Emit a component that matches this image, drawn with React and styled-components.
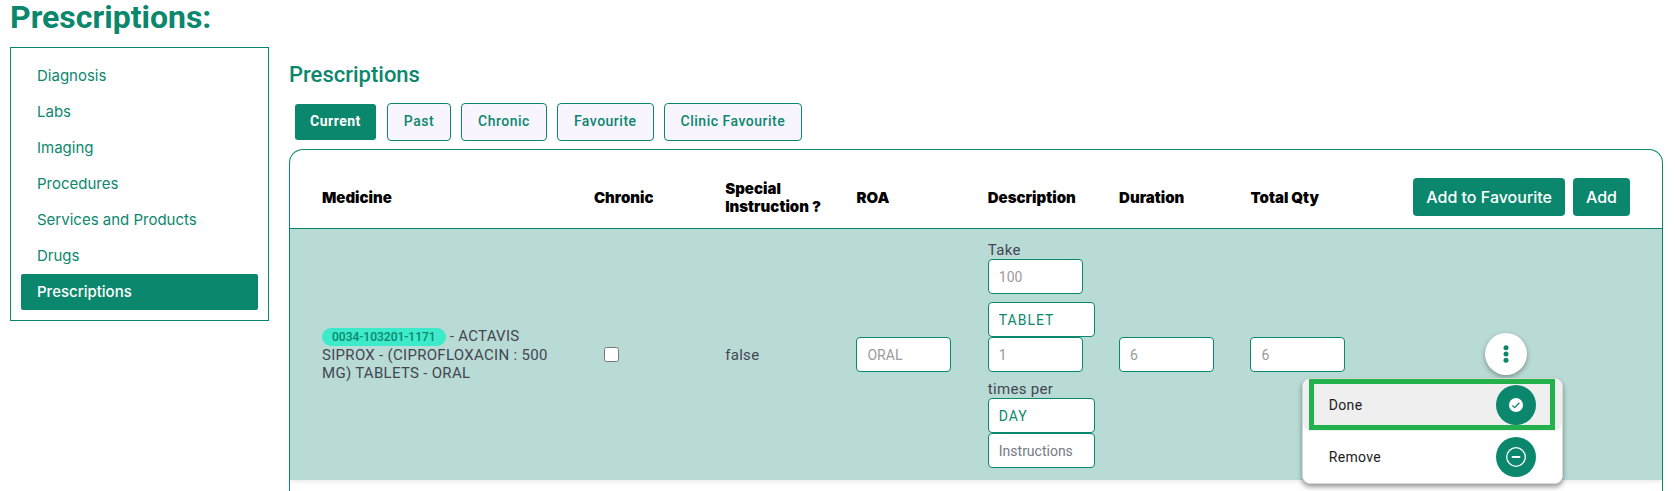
import React from "react";
import styled, { createGlobalStyle, ThemeProvider } from "styled-components";

const theme = {
  colors: {
    primary: "#0b876d",
    row: "#b8dbd5",
    tab: "#f8f5ff",
    text: "#444651",
    muted: "#9b9b9b",
    highlight: "#22b14c",
  },
};

const GlobalStyle = createGlobalStyle`
  * {
    box-sizing: border-box;
  }

  body {
    margin: 0;
    background: #fff;
    font-family: Roboto, sans-serif;
  }

  button, input, select {
    font-family: inherit;
  }
`;

const Page = styled.div`
  display: flex;
  flex-direction: column;
  min-height: 100vh;
  padding: 0 12px 0 10px;
`;

const PageTitle = styled.h1`
  margin: 0;
  padding-bottom: 13px;
  font-size: 32px;
  line-height: 34px;
  font-weight: 700;
  color: ${(props) => props.theme.colors.primary};
`;

const Body = styled.div`
  display: flex;
  flex: 1;
  gap: 20px;
`;

const Sidebar = styled.nav`
  display: flex;
  flex-direction: column;
  align-self: flex-start;
  flex: 0 0 259px;
  padding: 10px;
  border: 1px solid ${(props) => props.theme.colors.primary};
`;

const SidebarLink = styled.a`
  padding: 0 16px;
  border-radius: 2px;
  font-family: Inter, sans-serif;
  font-size: 15px;
  line-height: 36px;
  font-weight: ${(props) => (props.$active ? 500 : 400)};
  text-decoration: none;
  color: ${(props) => (props.$active ? "#fff" : props.theme.colors.primary)};
  background: ${(props) => (props.$active ? props.theme.colors.primary : "none")};
`;

const Main = styled.main`
  display: flex;
  flex-direction: column;
  flex: 1;
  min-width: 0;
`;

const SectionTitle = styled.h2`
  margin: 0;
  padding: 15px 0;
  font-size: 22px;
  line-height: 26px;
  font-weight: 500;
  color: ${(props) => props.theme.colors.primary};
`;

const Tabs = styled.div`
  display: flex;
  gap: 10px;
  padding: 0 5px 8px;
`;

const Tab = styled.button`
  height: 38px;
  padding: 0 ${(props) => (props.$active ? "15px" : "16px")} 2px;
  border: 1px solid
    ${(props) => (props.$active ? "transparent" : props.theme.colors.primary)};
  border-radius: 4px;
  font-size: 14px;
  font-weight: ${(props) => (props.$active ? 700 : 500)};
  letter-spacing: 0.5px;
  color: ${(props) => (props.$active ? "#fff" : props.theme.colors.primary)};
  background: ${(props) =>
    props.$active ? props.theme.colors.primary : props.theme.colors.tab};
  background-clip: padding-box;
`;

const Card = styled.section`
  flex: 1;
  border: 1px solid ${(props) => props.theme.colors.primary};
  border-bottom: 0;
  border-radius: 14px 14px 0 0;
`;

const Table = styled.table`
  width: 100%;
  table-layout: fixed;
  border-collapse: separate;
  border-spacing: 0;
`;

const Col = styled.col`
  width: ${(props) => props.$width};
`;

const Th = styled.th`
  height: 79px;
  padding: 17px 24px 0 0;
  border-bottom: 1px solid ${(props) => props.theme.colors.primary};
  font-family: Inter, sans-serif;
  font-size: 15px;
  line-height: 18px;
  font-weight: 900;
  text-align: left;
  color: #000;

  &:first-child {
    padding-left: 32px;
  }

  &:last-child {
    padding-top: 16px;
    padding-right: 32px;
  }
`;

const Row = styled.tr`
  background: ${(props) => props.theme.colors.row};
  box-shadow: 0 2px 4px rgba(0, 0, 0, 0.08);
`;

const Td = styled.td`
  padding: 12px 0;
  font-size: 15px;
  line-height: 18px;
  letter-spacing: 0.3px;
  color: ${(props) => props.theme.colors.text};

  &:first-child {
    padding-left: 32px;
    padding-right: 40px;
  }

  &:last-child {
    padding-right: 32px;
    padding-bottom: 14px;
  }
`;

const HeaderActions = styled.div`
  display: flex;
  justify-content: flex-end;
  gap: 8px;
`;

const ActionButton = styled.button`
  height: 38px;
  padding: 0 13px;
  border: 0;
  border-radius: 4px;
  font-family: Inter, sans-serif;
  font-size: 16px;
  font-weight: 500;
  white-space: nowrap;
  color: #fff;
  background: ${(props) => props.theme.colors.primary};
`;

const Code = styled.span`
  display: inline-block;
  padding: 0 10px;
  border-radius: 10px;
  font-size: 12px;
  font-weight: 500;
  letter-spacing: normal;
  color: ${(props) => props.theme.colors.primary};
  background: #3deac9;
`;

const Checkbox = styled.input`
  display: block;
  width: 15px;
  height: 15px;
  margin: 0 10px;
`;

const Field = styled.input`
  display: block;
  width: ${(props) => (props.$wide ? "107px" : "95px")};
  height: 35px;
  padding: 0 10px;
  border: 1px solid ${(props) => props.theme.colors.primary};
  border-radius: 4px;
  font-size: 14px;
  color: ${(props) => props.theme.colors.muted};
  background: #fff;

  &::placeholder {
    color: #747b84;
  }
`;

const Select = styled.select`
  display: block;
  width: 107px;
  height: 35px;
  padding: 0 10px;
  border: 1px solid ${(props) => props.theme.colors.primary};
  border-radius: 4px;
  appearance: none;
  font-size: 14px;
  letter-spacing: 1px;
  color: ${(props) => props.theme.colors.primary};
  background: #fff;
`;

const Dosage = styled.div`
  display: flex;
  flex-direction: column;
  gap: 8px;
`;

const MenuAnchor = styled.div`
  position: relative;
  width: 42px;
  margin: 0 auto;
`;

const MoreButton = styled.button`
  display: flex;
  align-items: center;
  justify-content: center;
  width: 42px;
  height: 42px;
  padding: 0;
  border: 0;
  border-radius: 50%;
  background: #fff;
  box-shadow: 0 2px 5px rgba(0, 0, 0, 0.35);
`;

const Menu = styled.div`
  position: absolute;
  top: 45px;
  right: -36px;
  width: 261px;
  border: 1px solid #d9d9d9;
  border-radius: 8px;
  background: #fff;
  box-shadow: 0 3px 5px rgba(0, 0, 0, 0.4);
`;

const MenuItem = styled.button`
  position: relative;
  display: flex;
  align-items: center;
  justify-content: space-between;
  width: 100%;
  height: 52px;
  padding: 0 26px;
  border: 0;
  border-radius: 8px;
  font-size: 14px;
  letter-spacing: 0.3px;
  color: #1c1c1c;
  background: ${(props) => (props.$highlighted ? "#efefef" : "#fff")};

  &::after {
    content: "";
    display: ${(props) => (props.$highlighted ? "block" : "none")};
    position: absolute;
    inset: 0 7px 1px 6px;
    border: 5px solid ${(props) => props.theme.colors.highlight};
  }
`;

const IconCircle = styled.span`
  display: flex;
  align-items: center;
  justify-content: center;
  width: 40px;
  height: 40px;
  border-radius: 50%;
  background: ${(props) => props.theme.colors.primary};
`;

const sections = [
  "Diagnosis",
  "Labs",
  "Imaging",
  "Procedures",
  "Services and Products",
  "Drugs",
  "Prescriptions",
];

const tabs = ["Current", "Past", "Chronic", "Favourite", "Clinic Favourite"];

const columns = [
  "Medicine",
  "Chronic",
  "Special Instruction ?",
  "ROA",
  "Description",
  "Duration",
  "Total Qty",
];

const DotsIcon = () => (
  <svg width="6" height="18" viewBox="0 0 6 18" fill="#0b876d">
    <circle cx="3" cy="2.8" r="2.5" />
    <circle cx="3" cy="9" r="2.5" />
    <circle cx="3" cy="15.2" r="2.5" />
  </svg>
);

const DoneIcon = () => (
  <svg width="14" height="14" viewBox="0 0 14 14">
    <circle cx="7" cy="7" r="7" fill="#fff" />
    <path d="M3.4 7.4l2.2 2.2 4.8-4.8" fill="none" stroke="#0b876d" strokeWidth="1.3" />
  </svg>
);

const RemoveIcon = () => (
  <svg width="20" height="20" viewBox="0 0 20 20" fill="none" stroke="#fff">
    <circle cx="10" cy="10" r="9.3" strokeWidth="1.3" />
    <path d="M6.5 10h7" strokeWidth="1.8" strokeLinecap="round" />
  </svg>
);

const PrescriptionRow = () => (
  <Row>
    <Td>
      <Code>0034-103201-1171</Code> - ACTAVIS SIPROX - (CIPROFLOXACIN : 500 MG)
      TABLETS - ORAL
    </Td>
    <Td>
      <Checkbox type="checkbox" aria-label="Chronic" />
    </Td>
    <Td>false</Td>
    <Td>
      <Field aria-label="ROA" defaultValue="ORAL" />
    </Td>
    <Td>
      <Dosage>
        <div>
          <label htmlFor="dose">Take</label>
          <Field id="dose" defaultValue="100" />
        </div>
        <div>
          <Select aria-label="Unit">
            <option>TABLET</option>
          </Select>
          <Field aria-label="Frequency" defaultValue="1" />
        </div>
        <div>
          <label htmlFor="period">times per</label>
          <Select id="period">
            <option>DAY</option>
          </Select>
          <Field $wide aria-label="Instructions" placeholder="Instructions" />
        </div>
      </Dosage>
    </Td>
    <Td>
      <Field aria-label="Duration" defaultValue="6" />
    </Td>
    <Td>
      <Field aria-label="Total Qty" defaultValue="6" />
    </Td>
    <Td>
      <MenuAnchor>
        <MoreButton aria-label="More actions">
          <DotsIcon />
        </MoreButton>
        <Menu role="menu">
          <MenuItem role="menuitem" $highlighted>
            Done
            <IconCircle>
              <DoneIcon />
            </IconCircle>
          </MenuItem>
          <MenuItem role="menuitem">
            Remove
            <IconCircle>
              <RemoveIcon />
            </IconCircle>
          </MenuItem>
        </Menu>
      </MenuAnchor>
    </Td>
  </Row>
);

const App = () => {
  return (
    <ThemeProvider theme={theme}>
      <GlobalStyle />
      <Page>
        <PageTitle>Prescriptions:</PageTitle>
        <Body>
          <Sidebar>
            {sections.map((name) => (
              <SidebarLink key={name} href="#" $active={name === "Prescriptions"}>
                {name}
              </SidebarLink>
            ))}
          </Sidebar>
          <Main>
            <SectionTitle>Prescriptions</SectionTitle>
            <Tabs>
              {tabs.map((name) => (
                <Tab key={name} $active={name === "Current"}>
                  {name}
                </Tab>
              ))}
            </Tabs>
            <Card>
              <Table>
                <colgroup>
                  <Col $width="22.15%" />
                  {columns.slice(1).map((name) => (
                    <Col key={name} $width="9.57%" />
                  ))}
                  <Col />
                </colgroup>
                <thead>
                  <tr>
                    {columns.map((name) => (
                      <Th key={name}>{name}</Th>
                    ))}
                    <Th>
                      <HeaderActions>
                        <ActionButton>Add to Favourite</ActionButton>
                        <ActionButton>Add</ActionButton>
                      </HeaderActions>
                    </Th>
                  </tr>
                </thead>
                <tbody>
                  <PrescriptionRow />
                </tbody>
              </Table>
            </Card>
          </Main>
        </Body>
      </Page>
    </ThemeProvider>
  );
};

export default App;
